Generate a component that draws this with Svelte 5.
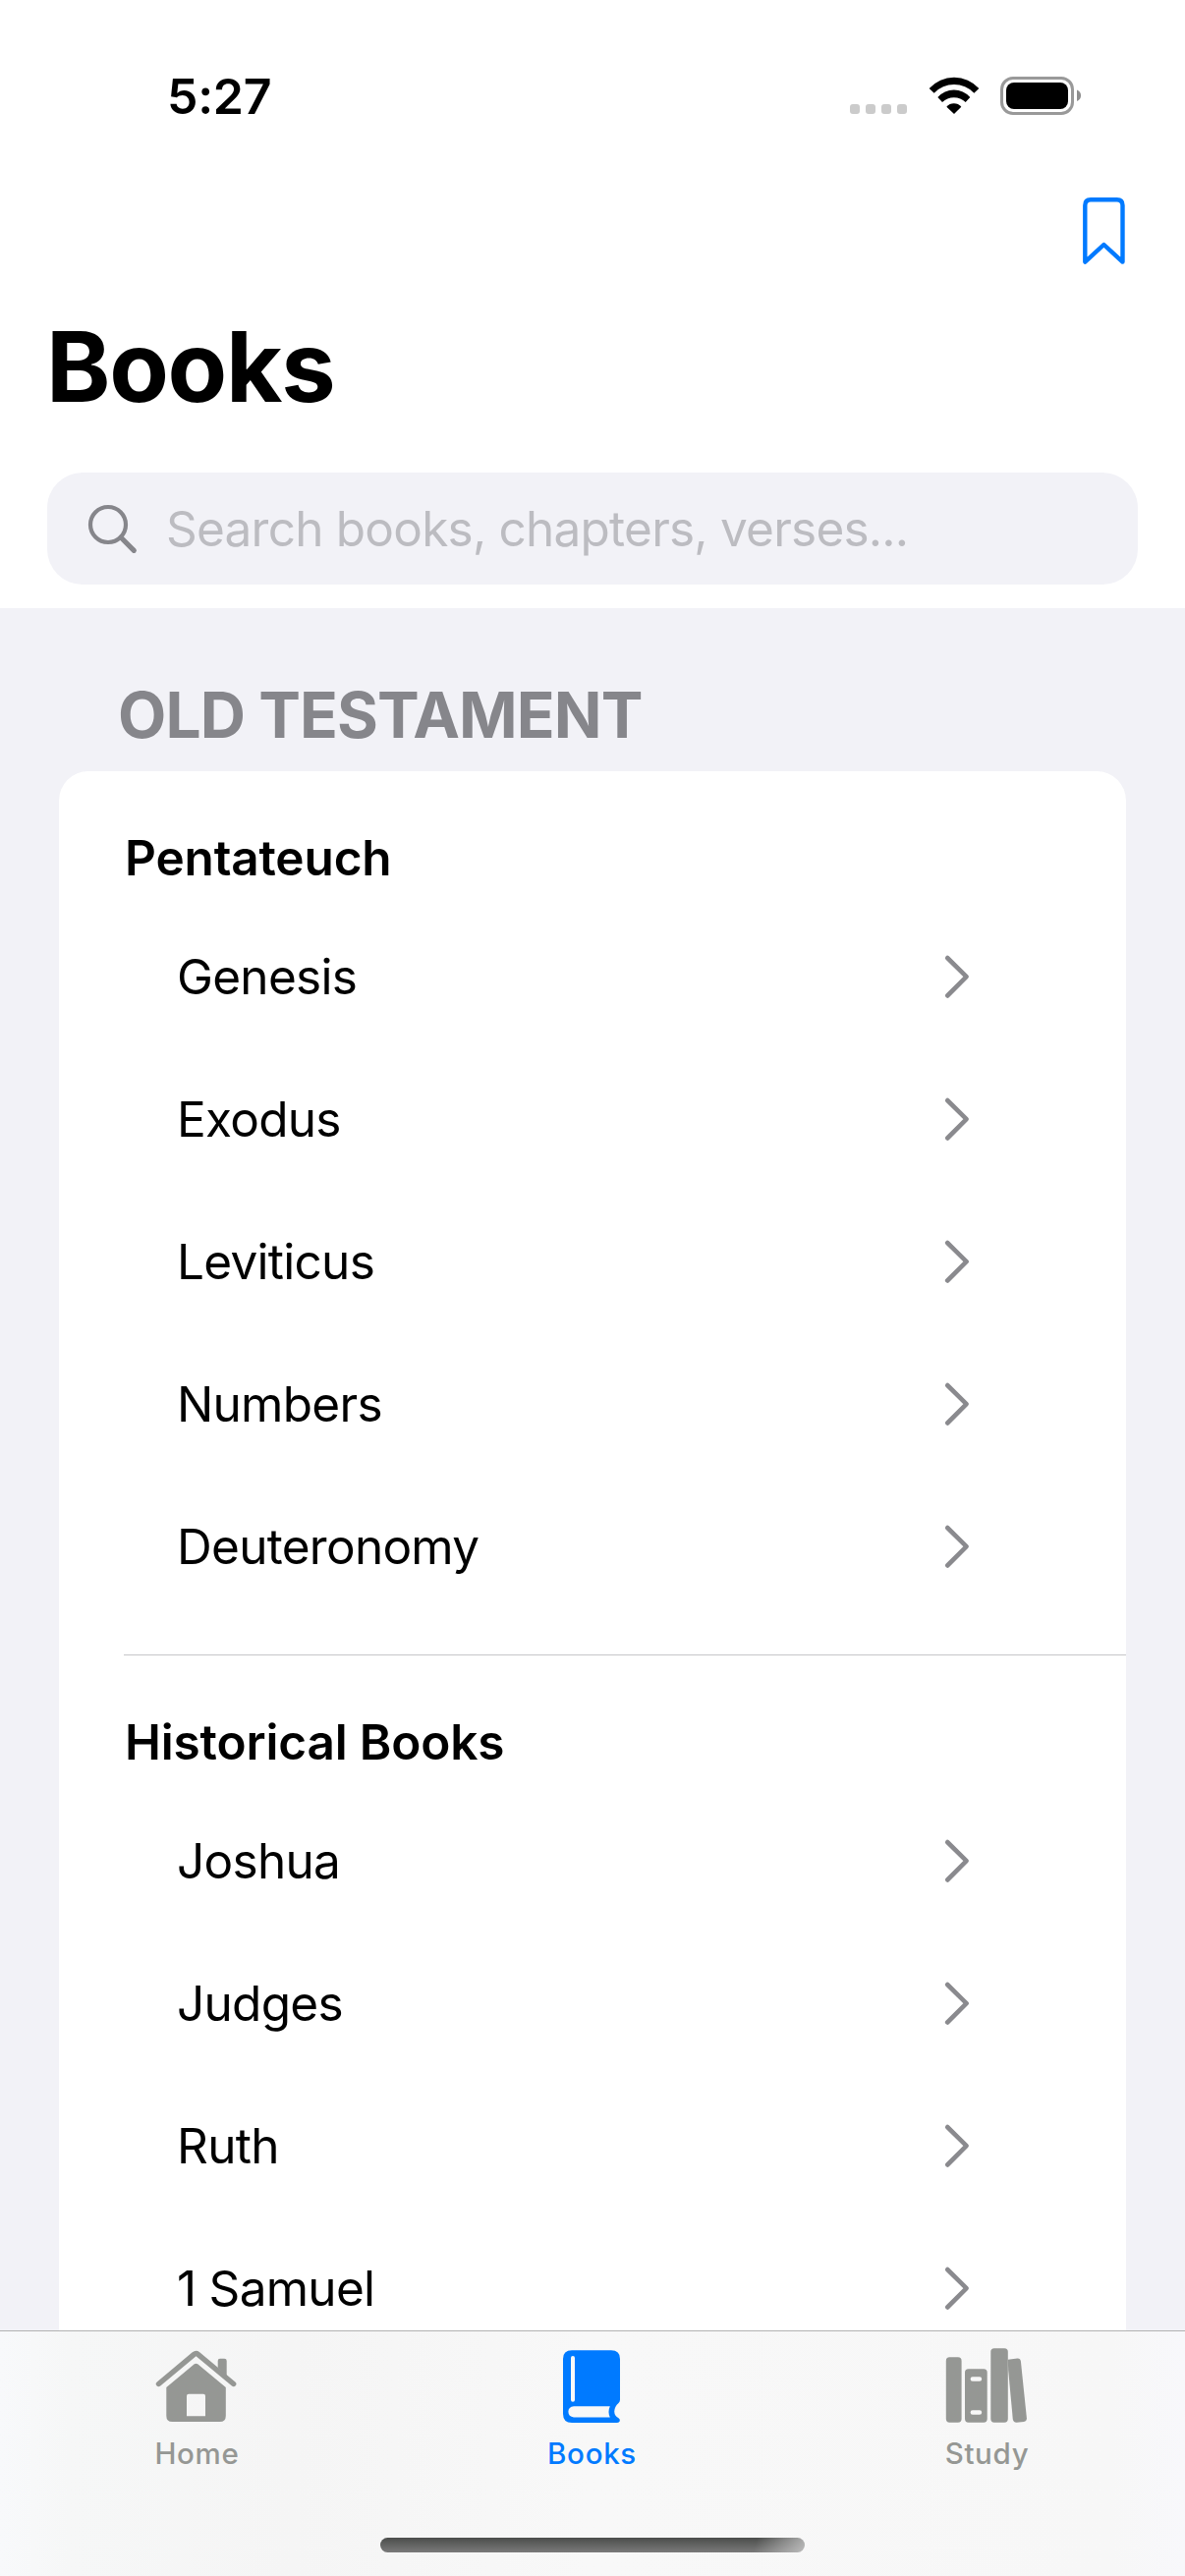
<script>
  const groups = [
    { name: 'Pentateuch', books: ['Genesis', 'Exodus', 'Leviticus', 'Numbers', 'Deuteronomy'] },
    { name: 'Historical Books', books: ['Joshua', 'Judges', 'Ruth', '1 Samuel'] }
  ];
</script>

<div class="screen">
  <header>
    <div class="status">
      <span class="time">5:27</span>
      <div class="indicators">
        <svg width="58" height="40" viewBox="865 78 58 40" fill="#cbcbcb">
          {#each [865, 881, 897, 913] as x}
            <rect {x} y="106" width="10" height="10" rx="3" />
          {/each}
        </svg>
        <svg width="52" height="40" viewBox="314 54 156 120">
          <path d="M316 90A102 102 0 0 1 468 90L453 104A84.5 84.5 0 0 0 331 104Z" />
          <path d="M342 117A66 66 0 0 1 441 117L427 132A51 51 0 0 0 356 132Z" />
          <path d="M369 146A30 30 0 0 1 414 146L392 168Z" />
        </svg>
        <svg width="83" height="40" viewBox="1018 78 83 40">
          <rect x="1019.5" y="79.5" width="72" height="36" rx="11.5" fill="none" stroke="#999" stroke-width="3" />
          <rect x="1024" y="84" width="63" height="27" rx="8" />
          <path d="M1096 91.5Q1100 93 1100 97.3T1096 103Z" fill="#8e8e8e" />
        </svg>
      </div>
    </div>
    <div class="actions">
      <svg width="46" height="72" viewBox="1100 199 46 72" fill="none" stroke="#007aff" stroke-width="4.4" stroke-linejoin="round">
        <path d="M1104.3 266.6V209Q1104.3 203.3 1110 203.3H1136.7Q1142.5 203.3 1142.5 209V266.6L1123.4 249Z" />
      </svg>
    </div>
    <h1>Books</h1>
    <div class="search">
      <svg width="52" height="52" viewBox="88 512 52 52" fill="none" stroke="#86868b" stroke-width="4.2" stroke-linecap="round">
        <circle cx="110" cy="534" r="18" />
        <path d="M123 547L136.3 560.3" stroke-width="5.2" />
      </svg>
      <span>Search books, chapters, verses...</span>
    </div>
  </header>

  <main>
    <h2>OLD TESTAMENT</h2>
    <div class="card">
      {#each groups as group}
        <section>
          <h3>{group.name}</h3>
          {#each group.books as book}
            <div class="row">
              <span>{book}</span>
              <svg width="28" height="47" viewBox="0 0 28 47" fill="none" stroke="#8a8a8e" stroke-width="4.6" stroke-linecap="round" stroke-linejoin="round">
                <path d="M4.2 5L23.6 24.2L4.2 43.5" />
              </svg>
            </div>
          {/each}
        </section>
      {/each}
    </div>
  </main>

  <footer>
    <nav>
      <div class="tab">
        <svg width="90" height="80" viewBox="156 2388 90 80" fill="#959794">
          <path d="M161.5 2426.5L197.5 2396.4Q199.5 2394.8 201.5 2396.4L237.7 2426.5" fill="none" stroke="#959794" stroke-width="5.4" stroke-linecap="round" />
          <path d="M221.7 2410V2403Q221.7 2400.7 224 2400.7H228.4Q230.7 2400.7 230.7 2403V2419Z" />
          <path fill-rule="evenodd" d="M169.3 2430L197.8 2406.3Q199.5 2405 201.2 2406.3L229.8 2430V2459Q229.8 2465 223.8 2465H175.3Q169.3 2465 169.3 2459ZM192 2436.7Q190 2436.7 190 2438.7V2459.3H209V2438.7Q209 2436.7 207 2436.7Z" />
        </svg>
        <span>Home</span>
      </div>
      <div class="tab active">
        <svg width="90" height="80" viewBox="558 2388 90 80" fill="#007aff">
          <path fill-rule="evenodd" d="M582 2392.3H622Q631 2392.3 631 2401V2442.5Q631 2444.5 629.5 2446Q625.5 2449.5 625.2 2454.5Q625.3 2459 629.5 2461.3Q631.2 2462.4 630.8 2464.2Q630.3 2466 628 2466H582Q573 2466 573 2457V2401Q573 2392.3 582 2392.3ZM583 2398Q581 2398 581 2400V2442.8Q581 2444.8 583 2444.8Q585 2444.8 585 2442.8V2400Q585 2398 583 2398ZM584 2449.3Q578.4 2449.8 578.4 2454.8Q578.4 2459.8 584 2460.4H620.8Q618.2 2455 620.8 2449.3Z" />
        </svg>
        <span>Books</span>
      </div>
      <div class="tab">
        <svg width="90" height="80" viewBox="960 2388 90 80" fill="#959794">
          <rect x="962.8" y="2399.3" width="15.8" height="66.4" rx="3.6" />
          <path fill-rule="evenodd" d="M985.6 2411.2H1001.1Q1004.7 2411.2 1004.7 2414.8V2462.1Q1004.7 2465.7 1001.1 2465.7H985.6Q982 2465.7 982 2462.1V2414.8Q982 2411.2 985.6 2411.2ZM989.8 2419.3A2.2 2.2 0 0 0 989.8 2423.7H997A2.2 2.2 0 0 0 997 2419.3ZM989.8 2453.3A2.2 2.2 0 0 0 989.8 2457.7H997A2.2 2.2 0 0 0 997 2453.3Z" />
          <rect x="1008.3" y="2390.2" width="17.5" height="75.5" rx="3.6" />
          <path d="M1025.8 2401.8L1035.4 2400.6Q1038.5 2400.4 1038.9 2403.6L1044.9 2461.2Q1045 2464.4 1042 2464.9L1034.6 2465.7Q1031.3 2465.8 1030.8 2462.6L1026.2 2413Z" />
        </svg>
        <span>Study</span>
      </div>
    </nav>
    <div class="indicator"></div>
  </footer>
</div>

<style>
  :global(body) { margin: 0; }
  .screen {
    width: 1206px; height: 2622px; box-sizing: border-box; overflow: hidden;
    display: flex; flex-direction: column;
    background: #f2f2f7; color: #000; font-family: Inter, "Liberation Sans", sans-serif;
  }
  header { background: #fff; height: 619px; flex: none; }
  .status {
    height: 196px; display: flex; align-items: center; justify-content: space-between;
    box-sizing: border-box; padding: 0 105px 0 170px;
  }
  .time { font-size: 50px; font-weight: 600; letter-spacing: -0.3px; }
  .indicators { display: flex; gap: 21.5px; }
  svg { display: block; flex: none; }
  .actions { height: 78px; display: flex; align-items: center; justify-content: flex-end; padding-right: 60px; }
  h1 { margin: 0; padding-left: 47px; height: 198px; line-height: 198px; font-size: 99px; font-weight: 700; letter-spacing: -1.3px; }
  .search {
    margin: 9px 48px 0; height: 114px; border-radius: 36px; background: #f2f2f7;
    display: flex; align-items: center; gap: 29px; padding-left: 40px; color: #bcbcc1;
    font-size: 49.5px; letter-spacing: -0.77px; white-space: nowrap;
  }
  main { flex: 1; min-height: 0; overflow: hidden; }
  h2 {
    margin: 0; padding: 51px 0 0 120px; height: 115px; line-height: 115px;
    font-size: 64px; font-weight: 700; letter-spacing: -0.9px; color: #86868b;
  }
  .card { margin: 0 60px; background: #fff; border-radius: 30px 30px 0 0; }
  section { padding: 40px 0 0 66px; }
  section:not(:last-child)::after { content: ""; display: block; height: 1px; margin-top: 38px; background: #c6c6c8; }
  h3 { margin: 0; padding-left: 1px; height: 96px; line-height: 96px; font-size: 49.5px; font-weight: 600; letter-spacing: -0.15px; }
  .row {
    height: 145px; display: flex; align-items: center; justify-content: space-between;
    padding: 0 158px 0 54px; font-size: 49.5px; letter-spacing: -0.72px;
  }
  footer {
    height: 250px; flex: none; box-sizing: border-box; border-top: 1px solid #b2b2b2;
    background: linear-gradient(90deg, #f8f9fb 0, #f6f7f7 70px, #f5f5f5 300px, #f8f8f8 600px, #f7f7f7 1130px, #f8f8fb 100%);
    display: flex; flex-direction: column; align-items: center;
  }
  nav { display: grid; grid-template-columns: repeat(3, 402px); height: 209.7px; }
  .tab { display: flex; flex-direction: column; align-items: center; padding-top: 15px; color: #959794; font-size: 29.5px; font-weight: 500; letter-spacing: 0.7px; }
  .tab span { height: 36px; line-height: 36px; margin-top: 11px; padding-right: 1px; }
  .active { color: #007aff; }
  .indicator {
    width: 432px; height: 15px; border-radius: 8px;
    background: linear-gradient(105deg, transparent 88%, rgba(210, 210, 210, .75) 100%), linear-gradient(#4b4d4b, #7a7a7a);
  }
</style>
